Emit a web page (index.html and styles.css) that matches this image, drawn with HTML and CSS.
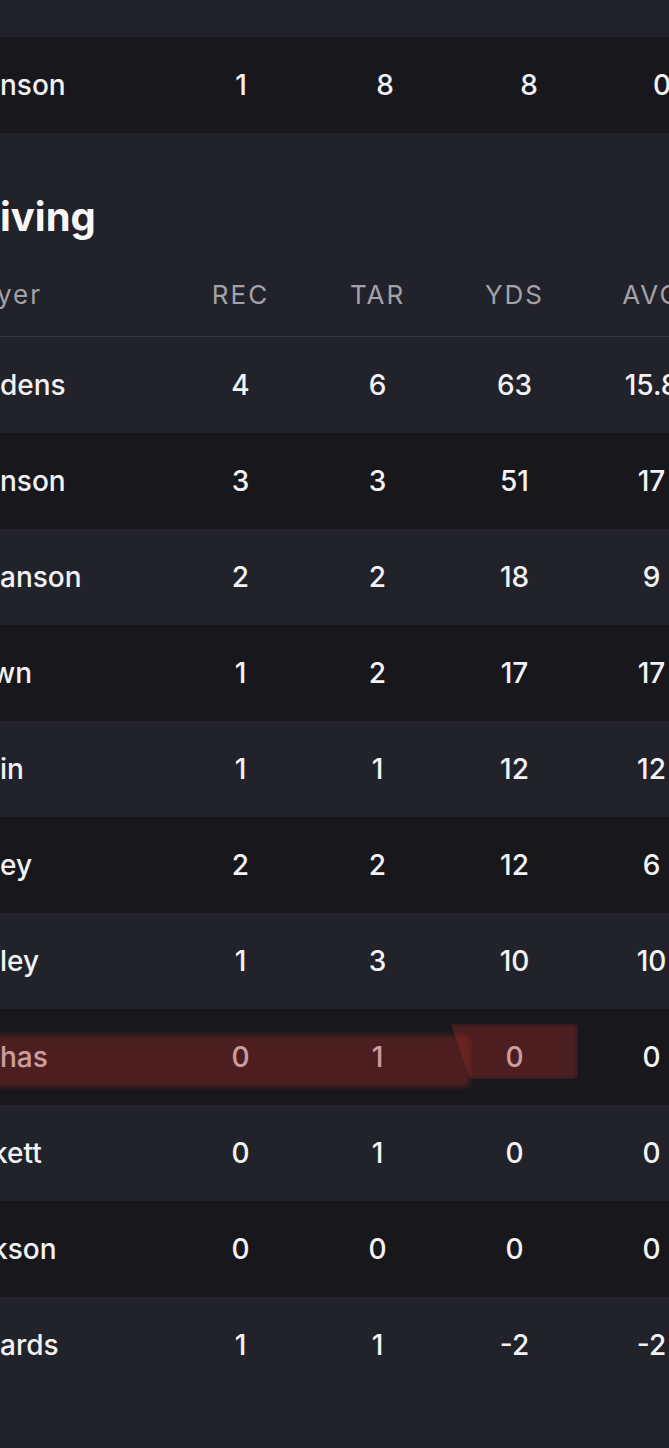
FILE: index.html
```html
<!DOCTYPE html>
<html lang="en">
<head>
<meta charset="utf-8">
<title>Box score</title>
<link rel="stylesheet" href="styles.css">
</head>
<body>
<div class="screen">
  <div class="table table-rush">
    <div class="row dark">
      <div class="name"><span class="pre"><span>Roschon Joh</span></span><span>nson</span></div>
      <div class="num">1</div><div class="num">8</div><div class="num">8</div><div class="num">0</div><div class="num">8</div>
    </div>
  </div>

  <section class="section">
    <h2 class="title"><span class="pre"><span>Rece</span></span><span>iving</span></h2>
    <div class="table">
      <div class="row head">
        <div class="name"><span class="pre"><span>Pla</span></span><span class="cut">yer</span></div>
        <div class="num">REC</div><div class="num">TAR</div><div class="num">YDS</div><div class="num">AVG</div><div class="num">TD</div>
      </div>
      <div class="row">
        <div class="name"><span class="pre"><span>Marcus Gid</span></span><span>dens</span></div>
        <div class="num">4</div><div class="num">6</div><div class="num">63</div><div class="num">15.8</div><div class="num">0</div>
      </div>
      <div class="row dark">
        <div class="name"><span class="pre"><span>Diontae Joh</span></span><span>nson</span></div>
        <div class="num">3</div><div class="num">3</div><div class="num">51</div><div class="num">17</div><div class="num">0</div>
      </div>
      <div class="row">
        <div class="name"><span class="pre"><span>Cole Sw</span></span><span>anson</span></div>
        <div class="num">2</div><div class="num">2</div><div class="num">18</div><div class="num">9</div><div class="num">0</div>
      </div>
      <div class="row dark">
        <div class="name"><span class="pre"><span>Noah Bro</span></span><span class="cut cut-deep">wn</span></div>
        <div class="num">1</div><div class="num">2</div><div class="num">17</div><div class="num">17</div><div class="num">0</div>
      </div>
      <div class="row">
        <div class="name"><span class="pre"><span>Calvin Aust</span></span><span>in</span></div>
        <div class="num">1</div><div class="num">1</div><div class="num">12</div><div class="num">12</div><div class="num">0</div>
      </div>
      <div class="row dark">
        <div class="name"><span class="pre"><span>Darnell Moon</span></span><span>ey</span></div>
        <div class="num">2</div><div class="num">2</div><div class="num">12</div><div class="num">6</div><div class="num">0</div>
      </div>
      <div class="row">
        <div class="name"><span class="pre"><span>Calvin Rid</span></span><span>ley</span></div>
        <div class="num">1</div><div class="num">3</div><div class="num">10</div><div class="num">10</div><div class="num">0</div>
      </div>
      <div class="row dark marked">
        <div class="name"><span class="pre"><span>Cole Mat</span></span><span>has</span></div>
        <div class="num">0</div><div class="num">1</div><div class="num">0</div><div class="num">0</div><div class="num">0</div>
        <span class="mark mark-long"></span>
        <span class="mark mark-short"></span>
      </div>
      <div class="row">
        <div class="name"><span class="pre"><span>Tyler Loc</span></span><span class="cut cut-deep">kett</span></div>
        <div class="num">0</div><div class="num">1</div><div class="num">0</div><div class="num">0</div><div class="num">0</div>
      </div>
      <div class="row dark">
        <div class="name"><span class="pre"><span>Lamar Jac</span></span><span class="cut cut-deep">kson</span></div>
        <div class="num">0</div><div class="num">0</div><div class="num">0</div><div class="num">0</div><div class="num">0</div>
      </div>
      <div class="row">
        <div class="name"><span class="pre"><span>Gus Edw</span></span><span>ards</span></div>
        <div class="num">1</div><div class="num">1</div><div class="num">-2</div><div class="num">-2</div><div class="num">0</div>
      </div>
    </div>
  </section>
</div>
</body>
</html>
```

FILE: styles.css
```css
html, body {
  margin: 0;
  padding: 0;
  background: #22232a;
}

body {
  font-family: Inter, "Noto Sans", "Liberation Sans", sans-serif;
  color: #f2f2f4;
  -webkit-font-smoothing: antialiased;
}

.screen {
  width: 669px;
  height: 1448px;
  overflow: hidden;
  padding-top: 37px;
  box-sizing: border-box;
}

.table {
  display: flex;
  flex-direction: column;
}

.row {
  position: relative;
  display: grid;
  grid-template-columns: 172px repeat(5, 137px);
  height: 96px;
  align-items: center;
  font-size: 28px;
  font-weight: 500;
  white-space: nowrap;
}

.table-rush .row {
  grid-template-columns: 170px 142px 146px 142px 124px 140px;
}

.row.dark {
  background: #18181c;
}

.name {
  display: flex;
  align-items: baseline;
}

.pre {
  display: flex;
  justify-content: flex-end;
  width: 0;
}

.pre > span {
  flex-shrink: 0;
  white-space: nowrap;
}

.cut {
  margin-left: -5px;
}

.cut-deep {
  margin-left: -8px;
}

.num {
  text-align: center;
}

.section {
  padding-top: 62px;
}

.title {
  display: flex;
  margin: 0;
  height: 44px;
  line-height: 44px;
  font-size: 40px;
  font-weight: 700;
  color: #f7f7f8;
}

.row.head {
  height: 98px;
  padding-top: 13px;
  box-sizing: border-box;
  font-size: 26px;
  font-weight: 400;
  letter-spacing: 2px;
  color: #a2a2a8;
  border-bottom: 1px solid #393a41;
}

.row.head .cut {
  margin-left: -3px;
}

.mark {
  position: absolute;
  background: rgba(150, 40, 38, 0.42);
  filter: blur(2.5px);
  pointer-events: none;
}

.mark-long {
  left: -10px;
  width: 480px;
  top: 26px;
  height: 52px;
  border-radius: 6px;
}

.mark-short {
  left: 448px;
  width: 130px;
  top: 15px;
  height: 55px;
  border-radius: 5px;
  clip-path: polygon(3px 0, 100% 0, 100% 100%, 22px 100%);
}
```
